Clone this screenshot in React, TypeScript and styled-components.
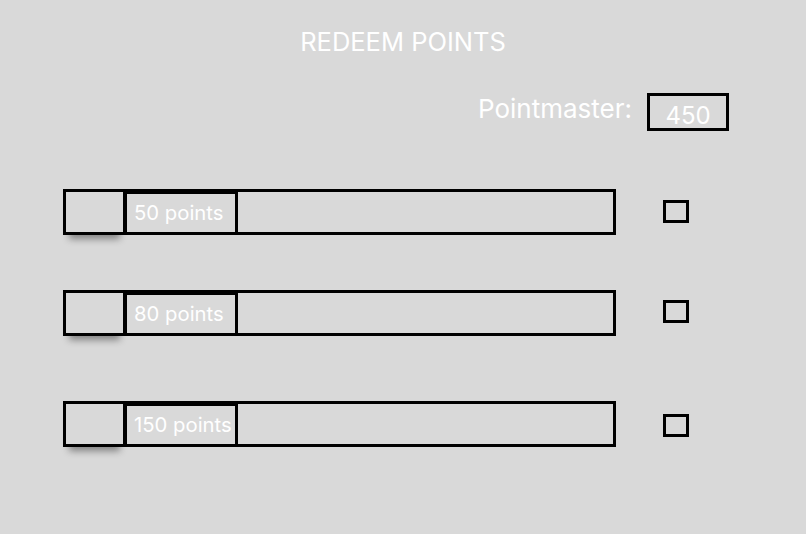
import React from 'react';
import styled, { createGlobalStyle } from 'styled-components';

const GlobalStyle = createGlobalStyle`
  html, body {
    margin: 0;
    padding: 0;
    background: #d9d9d9;
  }
  body {
    font-family: Inter, "Noto Sans", sans-serif;
  }
`;

const rewards = [
  { points: 50, gap: 58, boxTop: 11 },
  { points: 80, gap: 55, boxTop: 10 },
  { points: 150, gap: 65, boxTop: 13 },
];

function App() {
  return (
    <Page>
      <GlobalStyle />
      <Title>REDEEM POINTS</Title>
      <BalanceRow>
        <BalanceLabel>Pointmaster:</BalanceLabel>
        <BalanceBox>450</BalanceBox>
      </BalanceRow>
      {rewards.map(item => (
        <RewardRow key={item.points} $gap={item.gap}>
          <Bar>
            <Thumb />
            <PointsLabel>{item.points} points</PointsLabel>
          </Bar>
          <CheckBox $top={item.boxTop} />
        </RewardRow>
      ))}
    </Page>
  );
}

const Page = styled.div`
  width: 806px;
  height: 534px;
  box-sizing: border-box;
  padding-top: 29px;
  display: flex;
  flex-direction: column;
  color: #ffffff;
`;

const Title = styled.h1`
  margin: 0;
  font-size: 25.5px;
  line-height: 1;
  font-weight: 400;
  text-align: center;
`;

const BalanceRow = styled.div`
  margin-top: 38px;
  padding-right: 77px;
  display: flex;
  justify-content: flex-end;
  align-items: flex-start;
  gap: 15px;
`;

const BalanceLabel = styled.span`
  padding-top: 3px;
  font-size: 26px;
  line-height: 1;
`;

const BalanceBox = styled.div`
  width: 82px;
  height: 38px;
  box-sizing: border-box;
  border: 3px solid #000;
  padding-top: 8px;
  font-size: 24px;
  line-height: 1;
  text-align: center;
`;

const RewardRow = styled.div<{ $gap: number }>`
  margin-top: ${props => props.$gap}px;
  padding-left: 63px;
  display: flex;
  align-items: flex-start;
  gap: 47px;
`;

const Bar = styled.div`
  width: 553px;
  height: 46px;
  box-sizing: border-box;
  border: 3px solid #000;
  display: flex;
`;

const Thumb = styled.div`
  width: 57px;
  height: 100%;
  box-shadow: 0 10px 7px -3px rgba(0, 0, 0, 0.4);
`;

const PointsLabel = styled.div`
  width: 115px;
  box-sizing: border-box;
  border-top: 2px solid #000;
  border-left: 4px solid #000;
  border-right: 3px solid #000;
  padding: 2px 0 0 7px;
  display: flex;
  align-items: center;
  font-size: 20.3px;
  line-height: 1;
  white-space: nowrap;
`;

const CheckBox = styled.div<{ $top: number }>`
  margin-top: ${props => props.$top}px;
  width: 26px;
  height: 23px;
  box-sizing: border-box;
  border: 3px solid #000;
`;

export default App;
